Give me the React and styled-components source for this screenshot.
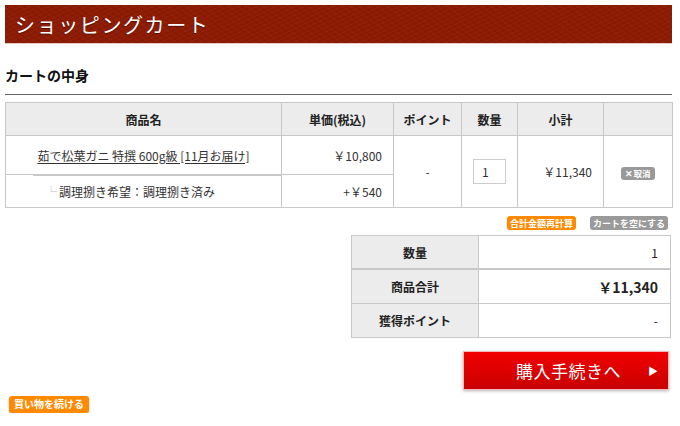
import React from "react";
import styled, { createGlobalStyle } from "styled-components";

const Global = createGlobalStyle`
  html, body { margin: 0; padding: 0; background: #fff; }
  body {
    font-family: "Noto Sans CJK JP", "Noto Sans", sans-serif;
    color: #333;
    font-size: 12px;
  }
`;

const Page = styled.div`
  width: 666px;
  padding: 5px 0 0 5px;
`;

const TitleBar = styled.header`
  width: 667px;
  height: 39px;
  display: flex;
  align-items: center;
  padding-left: 10px;
  background-color: #8e1b03;
  background-image:
    repeating-linear-gradient(35deg, rgba(0,0,0,0.05) 0 2px, transparent 2px 5px),
    repeating-linear-gradient(-25deg, rgba(255,255,255,0.03) 0 1px, transparent 1px 4px);
  border-bottom: 1px solid #e7c9c0;
  box-sizing: border-box;
`;

const Title = styled.h1`
  margin: 0;
  font-family: "Noto Sans CJK JP", serif;
  font-weight: 400;
  font-size: 20px;
  letter-spacing: 1.6px;
  color: #fff;
  text-shadow: 0 1px 1px rgba(0,0,0,0.4);
`;

const SectionTitle = styled.h2`
  width: 667px;
  margin: 21px 0 0;
  padding-bottom: 9px;
  font-size: 14px;
  line-height: 20px;
  font-weight: 700;
  color: #111;
  border-bottom: 1px solid #666;
`;

const Table = styled.table`
  border-collapse: collapse;
  width: 667px;
  margin-top: 7px;
  table-layout: fixed;
  font-size: 12px;
`;

const Th = styled.th`
  height: 32px;
  padding: 0;
  background: #ececec;
  border: 1px solid #c8c8c8;
  font-weight: 700;
  color: #222;
  text-align: center;
`;

const Td = styled.td`
  padding: 0 11px;
  border: 1px solid #c8c8c8;
  text-align: ${(p) => p.$align || "center"};
  height: ${(p) => p.$h || 32}px;
  color: #333;
  white-space: nowrap;
`;

const OptionTd = styled(Td)`
  border-top: none;
  padding-left: 39px;
  text-align: left;
  background-image: linear-gradient(#c8c8c8, #c8c8c8);
  background-size: calc(100% - 27px) 1px;
  background-position: right top;
  background-repeat: no-repeat;
`;

const Branch = styled.span`
  color: #bbb;
  margin-right: 2px;
`;

const ItemLink = styled.a`
  color: #333;
  text-decoration: underline;
  text-underline-offset: 2px;
`;

const QtyInput = styled.input`
  width: 33px;
  height: 25px;
  box-sizing: border-box;
  border: 1px solid #ccc;
  padding: 0 0 0 8px;
  font: inherit;
  font-size: 12px;
  color: #333;
`;

const SmallBtn = styled.button`
  border: none;
  border-radius: 3px;
  background: ${(p) => p.$bg};
  color: #fff;
  font-family: inherit;
  font-size: ${(p) => p.$fs || 9}px;
  font-weight: 700;
  height: ${(p) => p.$h || 14}px;
  padding: 0 ${(p) => p.$px || 3}px;
  line-height: 1;
  display: inline-flex;
  align-items: center;
  justify-content: center;
  box-shadow: ${(p) => (p.$shadow ? "0 1px 2px rgba(0,0,0,0.3)" : "none")};
  cursor: pointer;
`;

const Actions = styled.div`
  display: flex;
  justify-content: flex-end;
  gap: 14px;
  margin-top: 8px;
  padding-right: 3px;
`;

const SummaryWrap = styled.div`
  display: flex;
  justify-content: flex-end;
  margin-top: 5px;
`;

const Summary = styled.table`
  border-collapse: collapse;
  width: 320px;
  table-layout: fixed;
`;

const SumTh = styled.th`
  width: 126px;
  height: ${(p) => (p.$thick ? 32 : 33)}px;
  padding: 0;
  background: #ececec;
  border: 1px solid #c8c8c8;
  border-bottom-width: ${(p) => (p.$thick ? 2 : 1)}px;
  font-size: 12px;
  font-weight: 700;
  color: #222;
`;

const SumTd = styled.td`
  padding: 0 12px;
  border: 1px solid #c8c8c8;
  border-bottom-width: ${(p) => (p.$thick ? 2 : 1)}px;
  text-align: right;
  font-size: ${(p) => (p.$big ? 14 : 12)}px;
  font-weight: ${(p) => (p.$big ? 700 : 400)};
  color: #222;
`;

const BuyRow = styled.div`
  display: flex;
  justify-content: flex-end;
  margin-top: 13px;
  padding-right: 2px;
`;

const BuyButton = styled.button`
  width: 206px;
  height: 39px;
  box-sizing: border-box;
  border: 1px solid #f4b8b8;
  background: linear-gradient(#f20000, #c80000);
  box-shadow: 0 1px 3px rgba(0,0,0,0.3);
  color: #fff;
  font-family: inherit;
  font-size: 17px;
  display: flex;
  align-items: center;
  padding: 0 10px 0 52px;
  cursor: pointer;
`;

const BuyLabel = styled.span`
  flex: 1;
  text-align: left;
  letter-spacing: 0.5px;
`;

const Arrow = styled.span`
  font-size: 10px;
`;

const ContinueRow = styled.div`
  margin-top: 4px;
  padding-left: 4px;
`;

export default function App() {
  return (
    <Page>
      <Global />
      <TitleBar>
        <Title>ショッピングカート</Title>
      </TitleBar>
      <SectionTitle>カートの中身</SectionTitle>

      <Table>
        <colgroup>
          <col style={{ width: 276 }} />
          <col style={{ width: 112 }} />
          <col style={{ width: 68 }} />
          <col style={{ width: 56 }} />
          <col style={{ width: 86 }} />
          <col style={{ width: 69 }} />
        </colgroup>
        <thead>
          <tr>
            <Th>商品名</Th>
            <Th>単価(税込)</Th>
            <Th>ポイント</Th>
            <Th>数量</Th>
            <Th>小計</Th>
            <Th />
          </tr>
        </thead>
        <tbody>
          <tr>
            <Td $h={38}>
              <ItemLink href="#">茹で松葉ガニ 特撰 600g級 [11月お届け]</ItemLink>
            </Td>
            <Td $h={38} $align="right">￥10,800</Td>
            <Td rowSpan={2}>-</Td>
            <Td rowSpan={2}>
              <QtyInput defaultValue="1" />
            </Td>
            <Td rowSpan={2} $align="right">￥11,340</Td>
            <Td rowSpan={2}>
              <SmallBtn $bg="#999" $fs={8.5} $h={13} $px={4}>✕取消</SmallBtn>
            </Td>
          </tr>
          <tr>
            <OptionTd $h={32}>
              <Branch>└</Branch>調理捌き希望：調理捌き済み
            </OptionTd>
            <Td $h={32} $align="right">+￥540</Td>
          </tr>
        </tbody>
      </Table>

      <Actions>
        <SmallBtn $bg="#ff8a00">合計金額再計算</SmallBtn>
        <SmallBtn $bg="#9a9a9a">カートを空にする</SmallBtn>
      </Actions>

      <SummaryWrap>
        <Summary>
          <tbody>
            <tr>
              <SumTh $thick>数量</SumTh>
              <SumTd $thick>1</SumTd>
            </tr>
            <tr>
              <SumTh>商品合計</SumTh>
              <SumTd $big>￥11,340</SumTd>
            </tr>
            <tr>
              <SumTh>獲得ポイント</SumTh>
              <SumTd>-</SumTd>
            </tr>
          </tbody>
        </Summary>
      </SummaryWrap>

      <BuyRow>
        <BuyButton>
          <BuyLabel>購入手続きへ</BuyLabel>
          <Arrow>▶</Arrow>
        </BuyButton>
      </BuyRow>

      <ContinueRow>
        <SmallBtn $bg="#ff8a00" $h={17} $fs={10} $px={5} $shadow>買い物を続ける</SmallBtn>
      </ContinueRow>
    </Page>
  );
}
